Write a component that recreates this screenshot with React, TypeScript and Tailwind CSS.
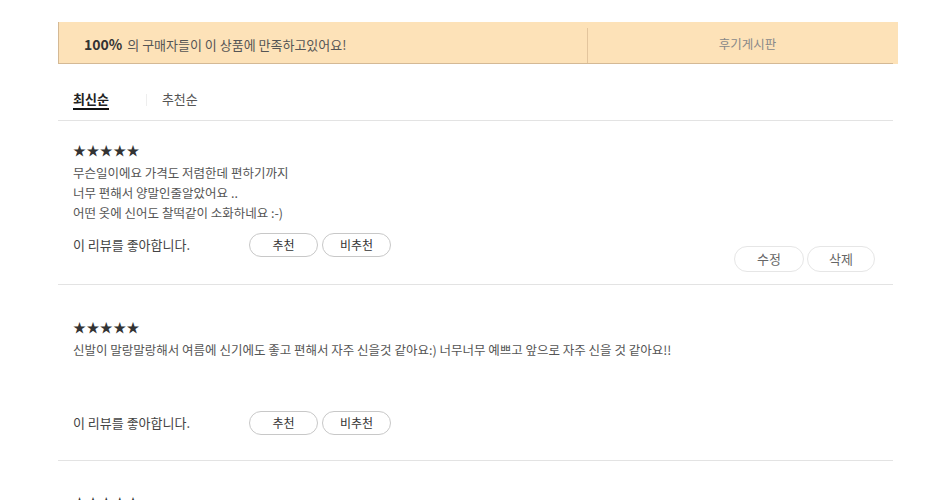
import React from "react";

const FONT = "font-['Noto_Sans_CJK_KR','Noto_Sans',sans-serif]";

interface Review {
  lines: string[];
  pt: string;
  likeMt: string;
  pb: string;
  mine?: boolean;
}

const REVIEWS: Review[] = [
  {
    lines: [
      "무슨일이에요 가격도 저렴한데 편하기까지",
      "너무 편해서 양말인줄알았어요 ..",
      "어떤 옷에 신어도 찰떡같이 소화하네요 :-)",
    ],
    pt: "pt-[19px]",
    likeMt: "mt-[10px]",
    pb: "pb-[12px]",
    mine: true,
  },
  {
    lines: [
      "신발이 말랑말랑해서 여름에 신기에도 좋고 편해서 자주 신을것 같아요:) 너무너무 예쁘고 앞으로 자주 신을 것 같아요!!",
    ],
    pt: "pt-[32px]",
    likeMt: "mt-[51px]",
    pb: "pb-[25px]",
  },
];

function PillButton({ label, className }: { label: string; className: string }) {
  return (
    <button className={`flex items-center justify-center rounded-full bg-white ${className}`}>
      {label}
    </button>
  );
}

function ReviewItem({ r }: { r: Review }) {
  return (
    <div className={`border-b border-[#e3e3e3] pl-[15px] pr-[18px] ${r.pt} ${r.pb}`}>
      <div className="text-[13px] leading-[20px] text-[#333] tracking-[0.4px]">★★★★★</div>
      <div className="mt-[3px] text-[12.5px] leading-[20px] text-[#555]">
        {r.lines.map((l, i) => (
          <p key={i}>{l}</p>
        ))}
      </div>
      <div className={`flex items-start justify-between ${r.likeMt}`}>
        <div className="flex items-center">
          <span className="w-[176px] text-[13px] leading-[24px] text-[#444]">이 리뷰를 좋아합니다.</span>
          <div className="flex gap-[4px]">
            <PillButton label="추천" className="h-[24px] w-[69px] border border-[#c8c8c8] text-[12px] text-[#333]" />
            <PillButton label="비추천" className="h-[24px] w-[69px] border border-[#c8c8c8] text-[12px] text-[#333]" />
          </div>
        </div>
        {r.mine && (
          <div className="mt-[13px] flex gap-[3px]">
            <PillButton label="수정" className="h-[26px] w-[70px] border border-[#e6e6e6] text-[13px] text-[#666]" />
            <PillButton label="삭제" className="h-[26px] w-[68px] border border-[#e6e6e6] text-[13px] text-[#666]" />
          </div>
        )}
      </div>
    </div>
  );
}

export default function App() {
  return (
    <div className={`min-h-[500px] w-[950px] overflow-hidden bg-white ${FONT}`}>
      <div className="ml-[58px] mt-[22px] w-[840px]">
        {/* satisfaction banner */}
        <div className="bg-[#fde2b8]">
          <div className="flex h-[42px] w-[835px] border-b border-l border-[#d4b995]">
            <div className="flex w-[528px] items-center pl-[25px] pt-[4px] text-[13px] text-[#555]">
              <b className="mr-[5px] text-[14px] font-bold text-[#333]">100%</b>의 구매자들이 이 상품에 만족하고있어요!
            </div>
            <div className="mt-[6px] h-[35px] w-px bg-[#e3c59d]" />
            <div className="flex flex-1 items-center justify-center pl-[14px] pt-[4px] text-[12.5px] text-[#888]">후기게시판</div>
          </div>
        </div>

        {/* sort tabs */}
        <div className="w-[835px]">
          <div className="flex h-[57px] items-end border-b border-[#e3e3e3] pb-[10px] pl-[15px]">
            <span className="border-b-2 border-[#111] text-[13px] font-bold leading-[18px] text-[#222]">최신순</span>
            <span className="mb-[4px] ml-[37px] h-[12px] w-px bg-[#eee]" />
            <span className="ml-[15px] pb-[2px] text-[13px] leading-[18px] text-[#555]">추천순</span>
          </div>

          {REVIEWS.map((r, i) => (
            <ReviewItem key={i} r={r} />
          ))}

          <div className="pl-[15px] pt-[31px] text-[13px] leading-[20px] text-[#333] tracking-[0.4px]">★★★★★</div>
        </div>
      </div>
    </div>
  );
}
